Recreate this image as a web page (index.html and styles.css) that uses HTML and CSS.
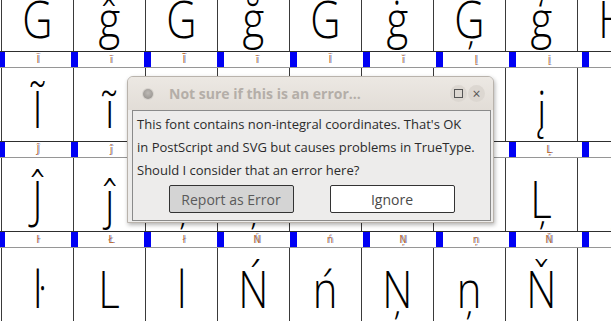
FILE: index.html
```html
<!DOCTYPE html>
<html>
<head>
    <title>Font View</title>
    <link rel="stylesheet" href="styles.css">
</head>
<body>
    <div class="fontview">
        <div class="glyphs first">
            <div class="cell"><span>G</span></div><div class="cell"><span>ĝ</span></div><div class="cell"><span>G</span></div><div class="cell"><span>ğ</span></div><div class="cell"><span>G</span></div><div class="cell"><span>ġ</span></div><div class="cell"><span>Ģ</span></div><div class="cell"><span>ģ</span></div><div class="cell"><span>H</span></div>
        </div>
        <div class="labels">
            <span class="mark edge"></span><span class="label">Ĩ</span><span class="mark"></span><span class="label">ĩ</span><span class="mark"></span><span class="label">Ī</span><span class="mark"></span><span class="label">ī</span><span class="mark"></span><span class="label">Ĭ</span><span class="mark"></span><span class="label">ĭ</span><span class="mark"></span><span class="label">Į</span><span class="mark"></span><span class="label">į</span><span class="mark"></span><span class="label">İ</span>
        </div>
        <div class="glyphs">
            <div class="cell"><span>Ĩ</span></div><div class="cell"><span>ĩ</span></div><div class="cell"><span>Ī</span></div><div class="cell"><span>ī</span></div><div class="cell"><span>Ĭ</span></div><div class="cell"><span>ĭ</span></div><div class="cell"><span>Į</span></div><div class="cell"><span>į</span></div><div class="cell"><span>İ</span></div>
        </div>
        <div class="labels">
            <span class="mark edge"></span><span class="label">Ĵ</span><span class="mark"></span><span class="label">ĵ</span><span class="mark"></span><span class="label">Ķ</span><span class="mark"></span><span class="label">ķ</span><span class="mark"></span><span class="label">ĸ</span><span class="mark"></span><span class="label">Ĺ</span><span class="mark"></span><span class="label">ĺ</span><span class="mark"></span><span class="label">Ļ</span><span class="mark"></span><span class="label">ļ</span>
        </div>
        <div class="glyphs">
            <div class="cell"><span>Ĵ</span></div><div class="cell"><span>ĵ</span></div><div class="cell"><span>Ķ</span></div><div class="cell"><span>ķ</span></div><div class="cell"><span>ĸ</span></div><div class="cell"><span>Ĺ</span></div><div class="cell"><span>ĺ</span></div><div class="cell"><span>Ļ</span></div><div class="cell"><span>ļ</span></div>
        </div>
        <div class="labels">
            <span class="mark edge"></span><span class="label">ŀ</span><span class="mark"></span><span class="label">Ł</span><span class="mark"></span><span class="label">ł</span><span class="mark"></span><span class="label">Ń</span><span class="mark"></span><span class="label">ń</span><span class="mark"></span><span class="label">Ņ</span><span class="mark"></span><span class="label">ņ</span><span class="mark"></span><span class="label">Ň</span><span class="mark"></span><span class="label">ŉ</span>
        </div>
        <div class="glyphs">
            <div class="cell"><span>ŀ</span></div><div class="cell"><span>L</span></div><div class="cell"><span>l</span></div><div class="cell"><span>Ń</span></div><div class="cell"><span>ń</span></div><div class="cell"><span>Ņ</span></div><div class="cell"><span>ņ</span></div><div class="cell"><span>Ň</span></div><div class="cell"></div>
        </div>
    </div>

    <div class="dialog">
        <div class="titlebar">
            <span class="dot"></span>
            <span class="title">Not sure if this is an error...</span>
            <span class="winbtn"><span class="square"></span></span>
            <span class="winbtn close">×</span>
        </div>
        <div class="frame">
            <p>This font contains non-integral coordinates. That's OK</p>
            <p>in PostScript and SVG but causes problems in TrueType.</p>
            <p>Should I consider that an error here?</p>
            <div class="buttons">
                <button class="btn pressed">Report as Error</button>
                <button class="btn">Ignore</button>
            </div>
        </div>
    </div>
</body>
</html>
```

FILE: styles.css
```css
html, body {
    margin: 0;
    width: 611px;
    height: 322px;
    overflow: hidden;
    background-color: #fff;
}
.fontview {
    width: 700px;
}
.glyphs {
    display: flex;
    margin-left: 1px;
}
.cell {
    flex: none;
    width: 72px;
    height: 73px;
    box-sizing: border-box;
    padding-top: 22px;
    border-left: 1px solid #3a3a3a;
    overflow: hidden;
    text-align: center;
    font-family: "Open Sans", "DejaVu Sans", sans-serif;
    font-weight: 340;
    font-size: 51px;
    line-height: 37px;
    color: #000;
}
.cell span {
    display: inline-block;
    transform: scaleX(0.82);
}
.first .cell {
    height: 51px;
    padding-top: 0;
}
.labels {
    display: flex;
    height: 15px;
    border-top: 1px solid #2e2e2e;
    border-bottom: 1px solid #969696;
}
.mark {
    flex: none;
    width: 7px;
    background-color: #0000f4;
}
.mark.edge {
    width: 5px;
}
.label {
    flex: none;
    width: 66px;
    text-align: center;
    font-family: "DejaVu Sans Condensed", "DejaVu Sans", sans-serif;
    font-size: 11px;
    line-height: 15px;
    color: #b8713a;
    text-shadow: 1px 0 rgba(50, 90, 200, 0.55);
}

/* the error popup on top of the font view */
.dialog {
    position: absolute;
    left: 127px;
    top: 76px;
    width: 367px;
    height: 147px;
    box-sizing: border-box;
    border: 1px solid #b9b3ac;
    border-radius: 6px 6px 0 0;
    background-color: #edeceb;
    box-shadow: 1px 2px 4px rgba(0,0,0,0.3);
    padding: 0 2px 0 4px;
    font-family: "Open Sans", "Noto Sans", sans-serif;
}
.titlebar {
    display: flex;
    align-items: center;
    height: 33px;
    margin: 0 -2px 0 -4px;
    padding: 0 8px 0 15px;
    border-radius: 5px 5px 0 0;
    background: linear-gradient(#ece8e3, #e2ddd7);
}
.dot {
    width: 10px;
    height: 10px;
    border-radius: 50%;
    background: radial-gradient(circle at 50% 40%, #bdb9b5, #8f8b87);
    box-shadow: 0 0 0 1px #d6d2cd;
}
.title {
    flex: 1;
    margin-left: 16px;
    font-size: 14px;
    font-weight: bold;
    color: #b4aea8;
}
.winbtn {
    width: 17px;
    height: 17px;
    margin-left: 1px;
    border-radius: 50%;
    background-color: #dcd7d1;
    display: flex;
    align-items: center;
    justify-content: center;
    color: #555;
    font-size: 14px;
    line-height: 17px;
}
.square {
    width: 7px;
    height: 7px;
    border: 1px solid #555;
}
.frame {
    height: 111px;
    box-sizing: border-box;
    border: 1px solid #8a8a8a;
    padding: 2px 4px 0 4px;
    font-size: 13px;
    color: #2b2b2b;
}
.frame p {
    margin: 0;
    line-height: 23px;
    white-space: nowrap;
}
.buttons {
    display: flex;
    justify-content: center;
    gap: 36px;
    margin-top: 3px;
}
.btn {
    width: 125px;
    height: 28px;
    border: 1px solid #333;
    border-radius: 2px;
    background-color: #fff;
    font-family: "Open Sans", "Noto Sans", sans-serif;
    font-size: 14px;
    color: #4a4a4a;
    padding: 0;
}
.btn.pressed {
    background-color: #d4d4d4;
    color: #5a5a5a;
}
```
